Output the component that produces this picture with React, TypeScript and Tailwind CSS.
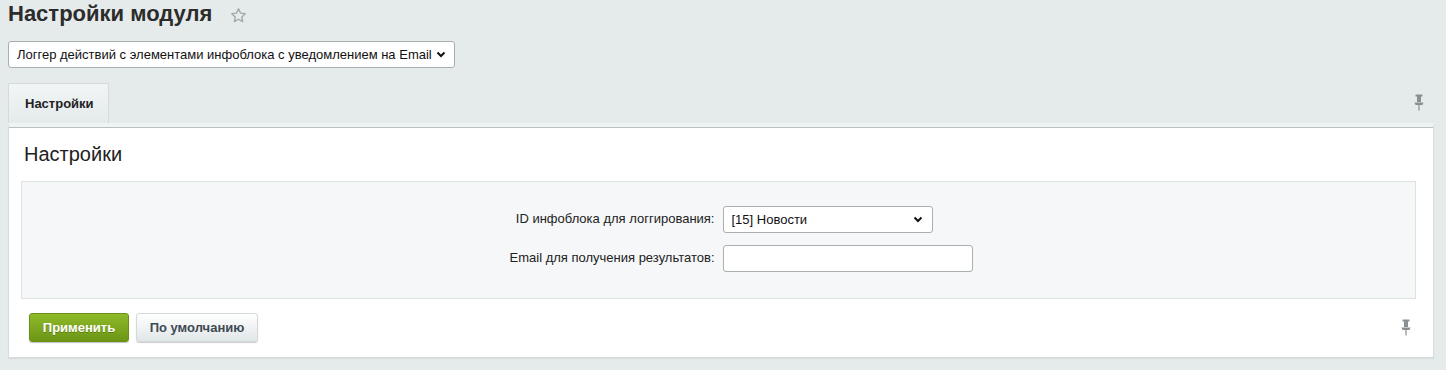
import React from 'react'

function Pin({ className }: { className?: string }) {
  return (
    <svg className={className} width="12" height="17" viewBox="0 0 12 17" fill="#8a8f91">
      <rect x="2.5" y="0.5" width="7" height="2" rx="0.5" />
      <rect x="4" y="2" width="4" height="6" />
      <path d="M1.5 8.5h9l-1 2.5h-7z" />
      <rect x="5.4" y="10.5" width="1.2" height="6" />
    </svg>
  )
}

function Chevron() {
  return (
    <svg width="10" height="7" viewBox="0 0 10 7" fill="none" stroke="#111" strokeWidth="2">
      <path d="M1.5 1.5l3.5 3.5 3.5-3.5" />
    </svg>
  )
}

function Star() {
  return (
    <svg width="17" height="17" viewBox="0 0 24 24" fill="none" stroke="#a3a9ab" strokeWidth="2" strokeLinejoin="round">
      <path d="M12 2.5l2.9 6.1 6.6.8-4.9 4.6 1.3 6.6L12 17.3l-5.9 3.3 1.3-6.6-4.9-4.6 6.6-.8z" />
    </svg>
  )
}

export default function App() {
  return (
    <div
      className="min-h-[370px] bg-[#e5ebeb] pl-2 pr-3 text-[#333]"
      style={{ fontFamily: '"Liberation Sans", Arial, sans-serif' }}
    >
      <div className="flex items-center h-[28px]">
        <h1 className="text-[22px] font-bold text-[#2c2c2c] leading-[26px]">Настройки модуля</h1>
        <span className="ml-[18px] mt-[2px]">
          <Star />
        </span>
      </div>

      <div className="mt-[13px] w-[447px] h-[27px] bg-white border border-[#a9aeb1] rounded-[3px] flex items-center justify-between pl-[8px] pr-[8px] text-[13px] text-[#111]">
        <span>Логгер действий с элементами инфоблока с уведомлением на Email</span>
        <Chevron />
      </div>

      <div className="mt-[15px] flex items-end justify-between h-[40px]">
        <div className="w-[101px] h-[40px] rounded-t-[2px] border border-b-0 border-[#d3dadb] bg-gradient-to-b from-[#f1f5f5] to-[#e5eaea] flex items-center pl-[16px] text-[13px] font-bold text-[#222]">
          Настройки
        </div>
        <Pin className="mb-[12px] mr-[9px]" />
      </div>

      <div className="bg-white border-x border-b border-[#d6dcdd] border-t-[4px] border-t-[#eef3f3] shadow-[0_1px_1px_rgba(0,0,0,0.06)]">
        <div className="border-t border-[#b9c0c2] pl-[12px] pr-[17px] pt-[14px] pb-[15px]">
          <h2 className="text-[20px] leading-[24px] text-[#222] pl-[3px]">Настройки</h2>

          <div className="mt-[15px] bg-[#f5f7f8] border border-[#dce1e2] pt-[24px] pb-[26px]">
            <div className="grid grid-cols-2 gap-y-[12px] text-[13px] text-[#222]">
              <div className="flex items-center justify-end pr-[4px] h-[26px]">ID инфоблока для логгирования:</div>
              <div className="pl-[4px]">
                <div className="w-[210px] h-[27px] bg-white border border-[#a9aeb1] rounded-[3px] flex items-center justify-between pl-[8px] pr-[9px] text-[#111]">
                  <span>[15] Новости</span>
                  <Chevron />
                </div>
              </div>
              <div className="flex items-center justify-end pr-[4px] h-[26px]">Email для получения результатов:</div>
              <div className="pl-[4px]">
                <div className="w-[250px] h-[27px] bg-white border border-[#a9aeb1] rounded-[3px]" />
              </div>
            </div>
          </div>

          <div className="mt-[14px] flex items-center justify-between pl-[8px]">
            <div className="flex gap-[7px]">
              <button className="w-[100px] h-[29px] rounded-[3px] bg-gradient-to-b from-[#8fba2a] to-[#6c9614] border border-[#6a9115] text-white text-[13px] font-bold shadow-[0_1px_1px_rgba(0,0,0,0.25)] [text-shadow:0_1px_0_rgba(0,0,0,0.25)]">
                Применить
              </button>
              <button className="w-[122px] h-[29px] rounded-[3px] bg-gradient-to-b from-[#ffffff] to-[#e1e6e8] border border-[#d3d9db] text-[#3f4a52] text-[13px] font-bold shadow-[0_1px_1px_rgba(0,0,0,0.2)]">
                По умолчанию
              </button>
            </div>
            <Pin className="mr-[4px]" />
          </div>
        </div>
      </div>
    </div>
  )
}
